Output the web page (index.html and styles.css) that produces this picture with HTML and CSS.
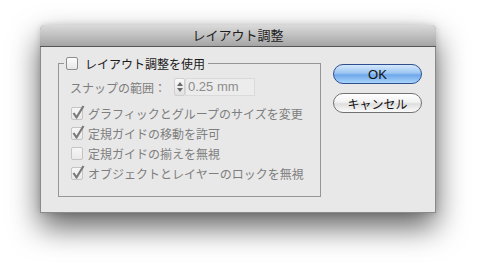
FILE: index.html
```html
<!DOCTYPE html>
<html lang="ja">
<head>
    <meta charset="UTF-8">
    <title>レイアウト調整</title>
    <link rel="stylesheet" href="styles.css">
</head>
<body>
    <div class="window">
        <div class="titlebar">レイアウト調整</div>
        <div class="window-body">
            <fieldset class="group">
                <legend class="group-title">
                    <span class="check"></span>
                    <span>レイアウト調整を使用</span>
                </legend>
                <div class="group-body">
                    <div class="snap-row">
                        <span class="snap-label">スナップの範囲：</span>
                        <span class="stepper">
                            <span class="arrow up"></span>
                            <span class="arrow down"></span>
                        </span>
                        <span class="field">0.25 mm</span>
                    </div>
                    <div class="option">
                        <span class="check off"><svg viewBox="0 0 13 13"><path d="M2.5 6 L5.5 10.5 L12.5 -1"/></svg></span>
                        <span>グラフィックとグループのサイズを変更</span>
                    </div>
                    <div class="option">
                        <span class="check off"><svg viewBox="0 0 13 13"><path d="M2.5 6 L5.5 10.5 L12.5 -1"/></svg></span>
                        <span>定規ガイドの移動を許可</span>
                    </div>
                    <div class="option">
                        <span class="check off"></span>
                        <span>定規ガイドの揃えを無視</span>
                    </div>
                    <div class="option">
                        <span class="check off"><svg viewBox="0 0 13 13"><path d="M2.5 6 L5.5 10.5 L12.5 -1"/></svg></span>
                        <span>オブジェクトとレイヤーのロックを無視</span>
                    </div>
                </div>
            </fieldset>
            <div class="buttons">
                <button type="button" class="btn btn-ok">OK</button>
                <button type="button" class="btn btn-cancel">キャンセル</button>
            </div>
        </div>
    </div>
</body>
</html>
```

FILE: styles.css
```css
html {
    height: 100%;
    background: #fff;
}
body {
    box-sizing: border-box;
    min-height: 100%;
    margin: 0;
    padding: 25px 0 0 40px;
    background: #fff;
    font-family: "Liberation Sans", "Noto Sans CJK JP", sans-serif;
    color: #222;
}
.window {
    width: 396px;
    height: 188px;
    box-sizing: border-box;
    border: 1px solid #8a8a8a;
    border-top: none;
    border-radius: 5px 5px 0 0;
    background: #e8e8e8;
    box-shadow: 0 14px 30px rgba(0, 0, 0, 0.62), 0 0 6px rgba(0, 0, 0, 0.15);
}
.titlebar {
    height: 21px;
    line-height: 21px;
    margin: 0 -1px;
    border-bottom: 1px solid #565656;
    border-radius: 5px 5px 0 0;
    background: linear-gradient(#dadada, #a5a5a5);
    text-align: center;
    font-size: 13px;
    color: #1e1e1e;
}
.window-body {
    display: flex;
    align-items: flex-start;
    padding: 9px 0 0 17px;
}
.group {
    box-sizing: border-box;
    width: 263px;
    height: 141px;
    margin: 0;
    padding: 0;
    min-width: 0;
    border: 1px solid #959595;
}
.group-title {
    display: flex;
    align-items: center;
    gap: 7px;
    height: 14px;
    margin-left: 5px;
    padding: 0 3px 0 2px;
    font-size: 12px;
    color: #1a1a1a;
}
.group-body {
    padding: 8px 0 0 12px;
    font-size: 12px;
    color: #7e7e7e;
}
.snap-row {
    display: flex;
    align-items: center;
    height: 18px;
    margin-left: -1px;
    margin-bottom: 7px;
}
.snap-label {
    width: 96px;
}
.stepper {
    display: flex;
    flex-direction: column;
    justify-content: space-between;
    align-items: center;
    box-sizing: border-box;
    width: 11px;
    height: 18px;
    margin-left: 8px;
    padding: 3px 0;
    border-radius: 2px;
    background: linear-gradient(#fafafa, #e2e2e2);
    border: 1px solid #d0d0d0;
}
.arrow {
    width: 0;
    height: 0;
    border-left: 3px solid transparent;
    border-right: 3px solid transparent;
}
.arrow.up {
    border-bottom: 4px solid #6a6a6a;
}
.arrow.down {
    border-top: 4px solid #6a6a6a;
}
.field {
    box-sizing: border-box;
    width: 70px;
    height: 18px;
    line-height: 16px;
    padding-left: 2px;
    border: 1px solid #dadada;
    background: #ececec;
    font-size: 13px;
    color: #8c8c8c;
}
.option {
    display: flex;
    align-items: center;
    gap: 5px;
    height: 20px;
}
.check {
    position: relative;
    flex: none;
    box-sizing: border-box;
    width: 12px;
    height: 13px;
    border: 1px solid #8e8e8e;
    border-radius: 2px;
    background: linear-gradient(#fdfdfd, #e6e6e6);
}
.check.off {
    border-color: #c4c4c4;
    background: linear-gradient(#f6f6f6, #e9e9e9);
}
.check svg {
    position: absolute;
    left: -1px;
    top: -1px;
    width: 13px;
    height: 13px;
    overflow: visible;
}
.check path {
    fill: none;
    stroke: #7a7a7a;
    stroke-width: 2.2;
    stroke-linejoin: round;
}
.buttons {
    display: flex;
    flex-direction: column;
    gap: 9px;
    margin: 8px 0 0 12px;
}
.btn {
    width: 89px;
    height: 20px;
    padding: 0;
    border-radius: 10px;
    font-family: "Liberation Sans", "Noto Sans CJK JP", sans-serif;
    color: #111;
    cursor: pointer;
}
.btn-ok {
    border: 1px solid #2f4f8f;
    background: linear-gradient(#d4e8fc 0%, #9cc6f3 45%, #6ea7ea 55%, #a9d4fb 100%);
    font-size: 13px;
}
.btn-cancel {
    border: 1px solid #727272;
    background: linear-gradient(#ffffff 0%, #f2f2f2 45%, #dedede 55%, #fbfbfb 100%);
    font-size: 12px;
}
```
